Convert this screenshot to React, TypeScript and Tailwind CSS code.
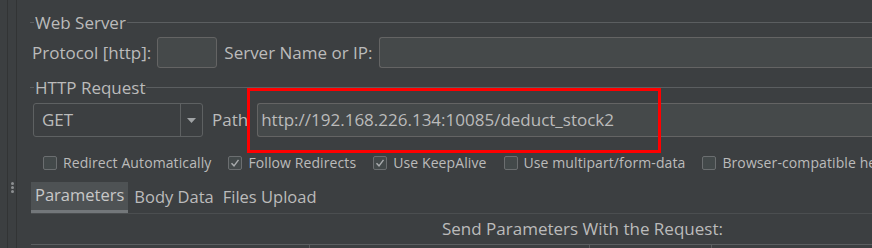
const FONT = "font-['Open_Sans',sans-serif]";

function GroupTitle({ label }: { label: string }) {
  return (
    <div className="flex items-center h-[14px]">
      <div className="w-[4px] h-px bg-[#5b5e60]" />
      <span className="px-[1px] text-[17px] leading-none text-[#bbbbbb]">{label}</span>
      <div className="flex-1 h-px bg-[#5b5e60]" />
    </div>
  );
}

function Check({ label, checked }: { label: string; checked?: boolean }) {
  return (
    <div className="flex items-center gap-[6px] shrink-0">
      <div className="w-[14px] h-[14px] rounded-[2px] border border-[#6b6e70] bg-[#43494a] flex items-center justify-center">
        {checked && (
          <svg width="10" height="10" viewBox="0 0 10 10" fill="none">
            <path d="M1.5 5.2 L4 7.8 L8.5 1.8" stroke="#a9acae" strokeWidth="1.4" />
          </svg>
        )}
      </div>
      <span className="text-[14px] tracking-[0.1px] text-[#bbbbbb] whitespace-nowrap">{label}</span>
    </div>
  );
}

export default function App() {
  return (
    <div className={`w-[872px] h-[248px] overflow-hidden bg-[#3c3f41] flex ${FONT}`}>
      {/* left gutter */}
      <div className="w-[31px] shrink-0 flex">
        <div className="w-[7px]" />
        <div className="w-px bg-[#323435]" />
        <div className="w-[8px] flex flex-col items-center pt-[182px]">
          <div className="w-[3px] h-[3px] rounded-full bg-[#8c8f91]" />
          <div className="w-[3px] h-[3px] rounded-full bg-[#8c8f91] mt-[1px]" />
          <div className="w-[3px] h-[3px] rounded-full bg-[#8c8f91] mt-[1px]" />
        </div>
        <div className="w-px bg-[#323435]" />
      </div>

      <div className="flex-1 min-w-0 flex flex-col relative">
        {/* Web Server */}
        <div className="pt-[15px] -ml-px">
          <GroupTitle label="Web Server" />
        </div>
        <div className="flex items-center mt-[8px] h-[31px] pl-[1px]">
          <span className="text-[17px] text-[#bbbbbb] whitespace-nowrap">Protocol [http]:</span>
          <div className="ml-[6px] w-[60px] h-[31px] rounded-[3px] border border-[#646464] bg-[#45494a] shrink-0" />
          <span className="ml-[7px] text-[17px] text-[#bbbbbb] whitespace-nowrap">Server Name or IP:</span>
          <div className="ml-[6px] flex-1 h-[31px] rounded-l-[3px] border border-r-0 border-[#646464] bg-[#45494a]" />
        </div>

        {/* HTTP Request */}
        <div className="mt-[12px] -ml-px">
          <GroupTitle label="HTTP Request" />
        </div>
        <div className="flex items-center mt-[9px] h-[34px] pl-[2px]">
          <div className="w-[170px] h-[34px] shrink-0 rounded-[3px] border border-[#5e6162] bg-[#3c3f41] flex">
            <div className="flex-1 flex items-center pl-[8px] text-[17px] text-[#bbbbbb]">GET</div>
            <div className="w-px bg-[#5e6162]" />
            <div className="w-[21px] flex items-center justify-center">
              <svg width="9" height="5" viewBox="0 0 9 5">
                <path d="M0 0 H9 L4.5 5 Z" fill="#a0a3a5" />
              </svg>
            </div>
          </div>
          <span className="ml-[9px] text-[17px] text-[#bbbbbb]">Path</span>
          <div className="ml-[9px] flex-1 h-[34px] rounded-l-[3px] border border-r-0 border-[#646464] bg-[#45494a] flex items-center pl-[3px]">
            <span className="text-[17px] text-[#bbbbbb] whitespace-nowrap">http://192.168.226.134:10085/deduct_stock2</span>
          </div>
        </div>

        <div className="flex items-center gap-[17px] mt-[15px] pl-[12px]">
          <Check label="Redirect Automatically" />
          <Check label="Follow Redirects" checked />
          <Check label="Use KeepAlive" checked />
          <Check label="Use multipart/form-data" />
          <Check label="Browser-compatible headers" />
        </div>

        {/* tabs */}
        <div className="mt-[9px] flex border-b border-[#4b4e50] h-[35px]">
          <div className="px-[4px] bg-[#4e5254] border-b-[3px] border-[#73777a] flex items-center text-[16.5px] text-[#c8c8c8]">
            Parameters
          </div>
          <div className="pl-[6px] pr-[9px] flex items-center text-[16.5px] text-[#bbbbbb]">Body Data</div>
          <div className="flex items-center text-[16.5px] text-[#bbbbbb]">Files Upload</div>
        </div>

        <div className="h-[34px] flex items-center pl-[411px] text-[17px] text-[#bbbbbb] whitespace-nowrap">
          Send Parameters With the Request:
        </div>
        <div className="flex border-t border-[#5b5e60] h-[4px]">
          <div className="w-[279px] border-r border-[#5b5e60]" />
          <div className="w-[280px] border-r border-[#5b5e60]" />
          <div className="w-[122px] border-r border-[#5b5e60]" />
        </div>

        {/* highlight box */}
        <div className="absolute left-[216px] top-[88px] w-[414px] h-[65px] border-[3px] border-[#ff0000]" />
      </div>
    </div>
  );
}
